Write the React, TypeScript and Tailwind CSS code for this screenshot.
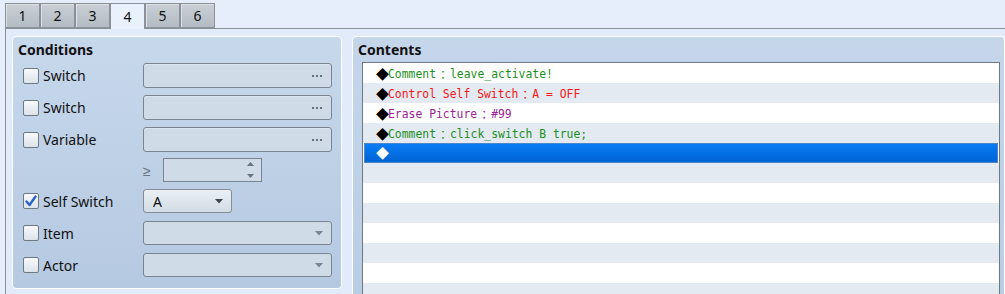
import React from "react";

const sans = "font-['Noto_Sans',sans-serif]";

function Checkbox({ checked }: { checked?: boolean }) {
  return (
    <div className="relative w-[16px] h-[16px] shrink-0 rounded-[2px] border border-[#6f7984] bg-gradient-to-b from-[#f8fafc] to-[#dce3ea]">
      {checked && (
        <svg className="absolute left-[0px] top-[0px]" width="14" height="14" viewBox="0 0 14 14">
          <path d="M2.5 7.5 L5.5 11 L11.5 2.5" stroke="#2b63c9" strokeWidth="2.4" fill="none" strokeLinecap="round" strokeLinejoin="round" />
        </svg>
      )}
    </div>
  );
}

function Dots() {
  return (
    <div className="flex gap-[2px] mr-[9px]">
      <div className="w-[2px] h-[2px] bg-[#66707b]" />
      <div className="w-[2px] h-[2px] bg-[#66707b]" />
      <div className="w-[2px] h-[2px] bg-[#66707b]" />
    </div>
  );
}

function Arrow({ color }: { color: string }) {
  return (
    <svg width="8" height="5" viewBox="0 0 8 5" className="mr-[8px]">
      <path d="M0 0 L8 0 L4 4.5 Z" fill={color} />
    </svg>
  );
}

function Row({ label, checked, children, mt }: { label: string; checked?: boolean; children: React.ReactNode; mt: string }) {
  return (
    <div className={`flex items-center ${mt}`}>
      <div className="flex items-center w-[120px] gap-[4px]">
        <Checkbox checked={checked} />
        <span className="text-[14px] leading-[19px] text-[#111]">{label}</span>
      </div>
      {children}
    </div>
  );
}

function DotsBox() {
  return (
    <div className="w-[189px] h-[25px] rounded-[3px] border border-[#7b8592] bg-[#cfdbe7] flex items-center justify-end shadow-[inset_0_1px_0_#dde6ef]">
      <Dots />
    </div>
  );
}

function ComboBox() {
  return (
    <div className="w-[189px] h-[24px] rounded-[3px] border border-[#7b8592] bg-[#cfdbe7] flex items-center justify-end">
      <Arrow color="#7c848e" />
    </div>
  );
}

const lines: { name: string; value: string; color: string }[] = [
  { name: "Comment", value: "leave_activate!", color: "text-[#1c8f1c]" },
  { name: "Control Self Switch", value: "A = OFF", color: "text-[#f41818]" },
  { name: "Erase Picture", value: "#99", color: "text-[#9a1e94]" },
  { name: "Comment", value: "click_switch B true;", color: "text-[#1c8f1c]" },
];

export default function App() {
  const mono = "font-['DejaVu_Sans_Mono',monospace]";
  const cjk = "font-['Noto_Sans_CJK_JP',sans-serif]";
  const emptyRows = Array.from({ length: 7 });
  return (
    <div className={`w-[1005px] h-[294px] overflow-hidden bg-[#e5eefa] ${sans}`}>
      {/* tabs */}
      <div className="flex pt-[3px] pl-[5px] h-[28px]">
        {["1", "2", "3", "4", "5", "6"].map((t) =>
          t === "4" ? (
            <div
              key={t}
              className="relative z-10 w-[35px] h-[26px] border border-b-0 border-[#8a9199] bg-[#e9f1fc] flex items-center justify-center text-[14px] text-[#111]"
            >
              {t}
            </div>
          ) : (
            <div
              key={t}
              className="w-[35px] h-[25px] border border-[#8a9199] bg-gradient-to-b from-[#c9cfd5] to-[#b3bbc3] shadow-[inset_1px_1px_0_#dde1e5] flex items-center justify-center text-[14px] text-[#111]"
            >
              {t}
            </div>
          )
        )}
      </div>
      {/* tab page */}
      <div className="ml-[5px] border-t border-l border-[#8a9199] bg-[#e1ebf9] h-[266px] flex pt-[7px] pl-[6px]">
        {/* Conditions */}
        <div className="w-[330px] h-[253px] rounded-[4px] border border-white bg-gradient-to-b from-[#c7d8ec] to-[#b5c9e1] pl-[10px] pr-[9px] flex flex-col">
          <div className="h-[26px] pt-[3px] -ml-[5px] text-[14px] leading-[19px] font-bold text-[#111]">Conditions</div>
          <Row label="Switch" mt="mt-0">
            <DotsBox />
          </Row>
          <Row label="Switch" mt="mt-[7px]">
            <DotsBox />
          </Row>
          <Row label="Variable" mt="mt-[7px]">
            <DotsBox />
          </Row>
          <div className="flex items-center mt-[6px] h-[24px]">
            <div className="w-[120px]" />
            <span className="text-[14px] leading-[19px] text-[#6a7684] w-[20px]">≥</span>
            <div className="w-[99px] h-[24px] border border-[#7b8592] bg-[#cfdbe7] flex items-center justify-end">
              <svg width="9" height="18" viewBox="0 0 9 18" className="mr-[6px]">
                <path d="M1 5 L8 5 L4.5 1 Z" fill="#6a7480" />
                <path d="M1 13 L8 13 L4.5 17 Z" fill="#6a7480" />
              </svg>
            </div>
          </div>
          <Row label="Self Switch" checked mt="mt-[7px]">
            <div className="w-[89px] h-[24px] rounded-[3px] border border-[#858d97] bg-gradient-to-b from-[#eaf0f5] to-[#d3dce5] flex items-center justify-between">
              <span className="ml-[9px] text-[14px] leading-[19px] text-[#111]">A</span>
              <Arrow color="#3f4650" />
            </div>
          </Row>
          <Row label="Item" mt="mt-[8px]">
            <ComboBox />
          </Row>
          <Row label="Actor" mt="mt-[8px]">
            <ComboBox />
          </Row>
        </div>
        {/* Contents */}
        <div className="ml-[10px] w-[660px] h-[270px] rounded-[4px] border border-white bg-gradient-to-b from-[#c5d6eb] to-[#b8cce3] pl-[9px] flex flex-col">
          <div className="h-[25px] pt-[3px] -ml-[4px] text-[14px] leading-[19px] font-bold text-[#111]">Contents</div>
          <div className="w-[638px] flex-1 border-t border-l border-r border-[#6f7986] bg-white flex flex-col">
            {lines.map((l, i) => (
              <div
                key={i}
                className={`h-[20px] shrink-0 flex items-center pl-[13px] pt-[1px] text-[11.4px] leading-[20px] whitespace-pre ${mono} ${
                  i % 2 === 0 ? "bg-white" : "bg-[#e3eaf2]"
                }`}
              >
                <span className={`${cjk} inline-block w-[12px] text-[13px] leading-[20px] text-black`}>◆</span>
                <span className={l.color}>{l.name}</span>
                <span className={`${cjk} inline-block w-[14px] text-center ${l.color}`}>：</span>
                <span className={l.color}>{l.value}</span>
              </div>
            ))}
            <div className="h-[20px] shrink-0 px-[1px] bg-white">
              <div className="h-[20px] border border-[#4c86c9] bg-gradient-to-b from-[#0a7cf3] to-[#0064d6] flex items-center pl-[11px]">
                <span className={`${cjk} inline-block w-[12px] text-[13px] leading-[18px] text-white`}>◆</span>
              </div>
            </div>
            {emptyRows.map((_, i) => (
              <div key={i} className={`h-[20px] shrink-0 ${i % 2 === 0 ? "bg-[#e3eaf2]" : "bg-white"}`} />
            ))}
          </div>
        </div>
      </div>
    </div>
  );
}
